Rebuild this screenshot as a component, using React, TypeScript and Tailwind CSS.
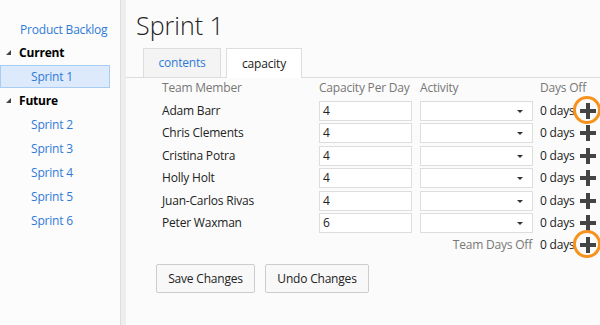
const members = [
  { name: 'Adam Barr', capacity: '4', marked: true },
  { name: 'Chris Clements', capacity: '4' },
  { name: 'Cristina Potra', capacity: '4' },
  { name: 'Holly Holt', capacity: '4' },
  { name: 'Juan-Carlos Rivas', capacity: '4' },
  { name: 'Peter Waxman', capacity: '6' },
];

const sprints = ['Sprint 2', 'Sprint 3', 'Sprint 4', 'Sprint 5', 'Sprint 6'];

function Caret() {
  return (
    <svg width="12" height="12" viewBox="0 0 12 12" className="block">
      <polygon points="3,5 9,5 6,8" fill="#333" />
    </svg>
  );
}

function Triangle() {
  return (
    <svg width="6" height="6" viewBox="0 0 6 6" className="block">
      <polygon points="5,0 5,5 0,5" fill="#444" />
    </svg>
  );
}

function PlusButton({ marked }: { marked?: boolean }) {
  return (
    <span className="relative flex h-[20px] w-[20px] items-center justify-center">
      <svg width="16" height="16" viewBox="0 0 16 16" className="block">
        <rect x="6" y="0" width="4" height="16" fill="#444" />
        <rect x="0" y="6" width="16" height="4" fill="#444" />
      </svg>
      {marked && (
        <span className="absolute left-[-5px] top-[-5px] h-[28px] w-[28px] rounded-full border-[3px] border-[#f7921e]" />
      )}
    </span>
  );
}

export default function App() {
  return (
    <div className="flex h-[325px] w-[600px] overflow-hidden bg-[#fcfcfc] font-['Open_Sans',sans-serif] text-[12px] tracking-[-0.2px] text-[#222]">
      {/* Left tree */}
      <aside className="w-[120px] shrink-0 pt-[18px]">
        <div className="flex h-[23px] items-center pl-[20px] text-[#2f7ad8]">Product Backlog</div>
        <div className="flex h-[24px] items-center gap-[7px] pl-[6px] font-bold text-black">
          <Triangle />
          Current
        </div>
        <div className="mr-[10px] flex h-[23px] items-center border border-[#a9cdf2] bg-[#dceafb] pl-[30px] text-[#2f7ad8]">
          Sprint 1
        </div>
        <div className="flex h-[25px] items-center gap-[7px] pl-[6px] font-bold text-black">
          <Triangle />
          Future
        </div>
        {sprints.map(s => (
          <div key={s} className="flex h-[24px] items-center pl-[31px] text-[#2f7ad8]">
            {s}
          </div>
        ))}
      </aside>

      {/* Splitter */}
      <div className="w-[6px] shrink-0 border-l border-[#dedede] bg-[#eeeeee]" />

      {/* Main */}
      <main className="flex-1 bg-[#fbfbfb]">
        <h1 className="pl-[10px] pt-[9px] text-[25px] font-light leading-[32px] tracking-normal text-[#222]">Sprint 1</h1>

        <div className="mt-[7px] flex gap-[5px] border-b border-[#dddddd] pl-[17px]">
          <div className="flex h-[29px] w-[78px] items-center justify-center border border-b-0 border-[#dddddd] bg-[#f4f4f4] text-[#2f7ad8]">
            contents
          </div>
          <div className="-mb-px flex h-[30px] w-[76px] items-center justify-center border border-b-0 border-[#dddddd] bg-white text-[#222]">
            capacity
          </div>
        </div>

        <div className="pl-[36px]">
          <div className="flex h-[20px] items-center text-[#777]">
            <span className="w-[157px]">Team Member</span>
            <span className="w-[101px]">Capacity Per Day</span>
            <span className="w-[120px]">Activity</span>
            <span>Days Off</span>
          </div>

          <div className="mt-[3px]">
            {members.map(m => (
              <div key={m.name} className="flex h-[22.4px] items-start">
                <span className="flex h-[20px] w-[157px] items-center">{m.name}</span>
                <span className="flex h-[20px] w-[93px] items-center border border-[#dddddd] bg-white pl-[3px]">
                  {m.capacity}
                </span>
                <span className="ml-[8px] flex h-[20px] w-[113px] items-center justify-end border border-[#dddddd] bg-white pr-[6px]">
                  <Caret />
                </span>
                <span className="ml-[7px] flex h-[20px] items-center gap-[3px]">
                  0 days
                  <PlusButton marked={m.marked} />
                </span>
              </div>
            ))}
            <div className="flex h-[22px] items-start">
              <span className="flex h-[20px] w-[371px] items-center justify-end pr-[1px] text-[#777]">Team Days Off</span>
              <span className="ml-[7px] flex h-[20px] items-center gap-[3px]">
                0 days
                <PlusButton marked />
              </span>
            </div>
          </div>
        </div>

        <div className="mt-[7px] flex gap-[10px] pl-[30px]">
          <button className="h-[29px] w-[99px] rounded-[2px] border border-[#cccccc] bg-[#f8f8f8] text-[#222]">
            Save Changes
          </button>
          <button className="h-[29px] w-[104px] rounded-[2px] border border-[#cccccc] bg-[#f8f8f8] text-[#222]">
            Undo Changes
          </button>
        </div>
      </main>
    </div>
  );
}
